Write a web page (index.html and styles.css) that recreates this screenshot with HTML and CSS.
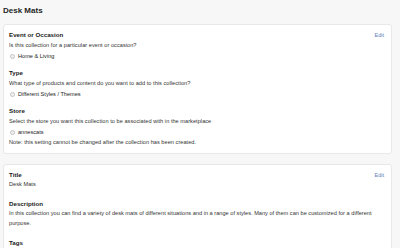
FILE: index.html
```html
<!DOCTYPE html>
<html>
<head>
<meta charset="utf-8">
<link rel="stylesheet" href="styles.css">
</head>
<body>
<main class="page">
  <h1 class="page-title">Desk Mats</h1>
  <section class="card">
    <div class="fields">
      <div class="field">
        <div class="field-title">Event or Occasion</div>
        <div class="field-desc">Is this collection for a particular event or occasion?</div>
        <div class="option"><span class="radio"></span>Home &amp; Living</div>
      </div>
      <div class="field">
        <div class="field-title">Type</div>
        <div class="field-desc">What type of products and content do you want to add to this collection?</div>
        <div class="option"><span class="radio"></span>Different Styles / Themes</div>
      </div>
      <div class="field">
        <div class="field-title">Store</div>
        <div class="field-desc">Select the store you want this collection to be associated with in the marketplace</div>
        <div class="option"><span class="radio"></span>annescats</div>
        <div class="field-desc">Note: this setting cannot be changed after the collection has been created.</div>
      </div>
    </div>
    <a class="edit" href="#">Edit</a>
  </section>
  <section class="card">
    <div class="fields fields-wide">
      <div class="field">
        <div class="field-title">Title</div>
        <div class="field-value">Desk Mats</div>
      </div>
      <div class="field">
        <div class="field-title">Description</div>
        <p class="field-para">In this collection you can find a variety of desk mats of different situations and in a range of styles. Many of them can be customized for a different purpose.</p>
      </div>
      <div class="field">
        <div class="field-title">Tags</div>
      </div>
    </div>
    <a class="edit" href="#">Edit</a>
  </section>
</main>
</body>
</html>
```
FILE: styles.css
```css
html, body {
  margin: 0;
  padding: 0;
  background: #f7f7f7;
  font-family: "Liberation Sans", Arial, sans-serif;
  color: #222;
}
.page {
  padding: 0 8px 0 3px;
}
.page-title {
  margin: 0;
  font-size: 8px;
  line-height: 10px;
  padding: 6px 0 8px;
  font-weight: bold;
  color: #1f1f1f;
}
.card {
  display: grid;
  grid-template-columns: 1fr auto;
  background: #fff;
  border: 1px solid #e8e8e8;
  border-radius: 3px;
  padding: 5px 7px 6px 5px;
  margin-bottom: 10px;
}
.fields {
  grid-column: 1 / -1;
  grid-row: 1;
  display: flex;
  flex-direction: column;
  gap: 7px;
}
.fields-wide {
  gap: 10px;
}
.field-title {
  font-size: 6.2px;
  font-weight: bold;
  line-height: 10px;
  color: #1a1a1a;
}
.field-desc, .field-value, .field-para {
  font-size: 5.6px;
  letter-spacing: 0.04px;
  line-height: 10px;
  color: #333;
}
.field-value {
  line-height: 9px;
}
.field-para {
  margin: 0;
  line-height: 9.5px;
  letter-spacing: 0.02px;
}
.option {
  display: flex;
  align-items: center;
  gap: 3px;
  font-size: 5.6px;
  line-height: 10px;
  margin-top: 1px;
  color: #222;
}
.radio {
  width: 3px;
  height: 3px;
  margin-left: 1px;
  border: 1px solid #c4c4c4;
  border-radius: 50%;
  background: #f0f0f0;
}
.edit {
  grid-column: 2;
  grid-row: 1;
  align-self: start;
  font-size: 5.5px;
  line-height: 10px;
  color: #5c7db8;
  text-decoration: none;
}
```
